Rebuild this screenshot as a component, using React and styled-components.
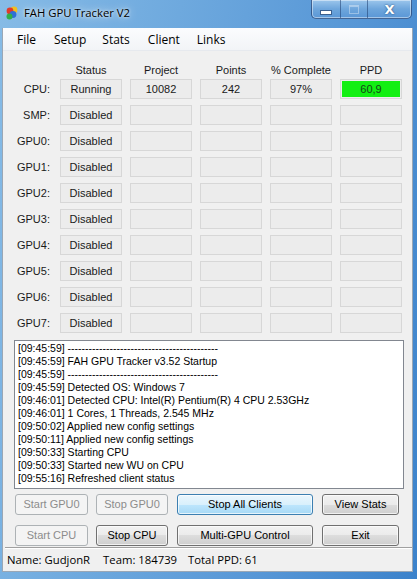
import React from "react";
import styled, { createGlobalStyle } from "styled-components";

const GlobalStyle = createGlobalStyle`
  html, body { margin: 0; padding: 0; background: #3f86cc; }
  body { font-family: "Liberation Sans", Arial, sans-serif; }
`;

const Window = styled.div`
  width: 417px;
  height: 579px;
  display: flex;
  flex-direction: column;
  background: linear-gradient(100deg, #86bbe6 0%, #6ea9de 35%, #5696d6 70%, #3b82cb 100%);
  overflow: hidden;
`;

const TitleBar = styled.div`
  height: 28px;
  flex: none;
  display: flex;
  align-items: flex-start;
  padding-left: 5px;
`;

const TitleText = styled.span`
  margin-top: 5px;
  margin-left: 5px;
  font-family: "Segoe UI", "Open Sans", sans-serif;
  font-size: 11.3px;
  color: #000;
  text-shadow: 0 0 8px rgba(255, 255, 255, 0.9), 0 0 3px rgba(255, 255, 255, 0.9);
`;

const IconBox = styled.div`
  margin-top: 6px;
  width: 14px;
  height: 14px;
`;

const Spacer = styled.div`
  flex: 1;
`;

const CaptionGroup = styled.div`
  display: flex;
  height: 18px;
  margin-right: 5px;
  border: 1px solid rgba(30, 60, 110, 0.7);
  border-top: none;
  border-radius: 0 0 5px 5px;
  overflow: hidden;
  background: linear-gradient(#9cc6ec, #6ea6dc 50%, #5a97d6);
  box-shadow: inset 0 0 0 1px rgba(255, 255, 255, 0.45);
`;

const CaptionButton = styled.div`
  width: ${p => p.w}px;
  display: flex;
  align-items: center;
  justify-content: center;
  border-left: ${p => (p.first ? "none" : "1px solid rgba(30, 60, 110, 0.55)")};
  color: #fff;
  font-family: "DejaVu Sans", sans-serif;
  font-weight: bold;
  font-size: 13px;
  text-shadow: 0 0 2px #1c3f6e;
`;

const MinGlyph = styled.div`
  width: 10px;
  height: 3px;
  margin-top: 6px;
  background: #fff;
  border: 1px solid #3b5f8e;
`;

const MaxGlyph = styled.div`
  width: 8px;
  height: 6px;
  border: 1px solid rgba(255, 255, 255, 0.5);
  border-top-width: 2px;
  opacity: 0.7;
`;

const Client = styled.div`
  flex: 1;
  margin: 0 4px 7px 2px;
  background: #f0f0f0;
  display: flex;
  flex-direction: column;
  border: 1px solid #9aa7b5;
  border-top: none;
`;

const MenuBar = styled.div`
  height: 22px;
  flex: none;
  display: flex;
  align-items: center;
  background: linear-gradient(#fbfcfe, #f2f4f7);
  border-bottom: 1px solid #e6e9ee;
  font-family: "Segoe UI", "Open Sans", sans-serif;
  font-size: 12px;
  color: #000;
  padding-left: 14px;
`;

const MenuItem = styled.span`
  margin-right: ${p => p.gap}px;
`;

const Body = styled.div`
  flex: 1;
  padding: 13px 0 0 2px;
  display: flex;
  flex-direction: column;
`;

const Grid = styled.div`
  display: grid;
  grid-template-columns: 47px repeat(5, 62px);
  column-gap: 8px;
  row-gap: 6px;
  font-size: 11px;
  color: #1a1a1a;
`;

const Header = styled.div`
  text-align: center;
  height: 12px;
  line-height: 12px;
  margin-bottom: -3px;
`;

const RowLabel = styled.div`
  text-align: right;
  padding-right: 2px;
  line-height: 20px;
`;

const Cell = styled.div`
  height: 18px;
  border: 1px solid #d7d7d7;
  background: #ececec;
  text-align: center;
  line-height: 18px;
`;

const GreenCell = styled(Cell)`
  padding: 1px;
  height: 16px;
  line-height: 16px;
  & > span {
    display: block;
    background: #12ef12;
    color: #15441a;
  }
`;

const LogBox = styled.div`
  margin: 7px 0 0 9px;
  width: 385px;
  height: 146px;
  border: 1px solid #828790;
  background: #fff;
  padding: 1px 0 0 3px;
  font-size: 10.5px;
  line-height: 13px;
  color: #000;
  white-space: pre;
  box-sizing: content-box;
`;

const ButtonGrid = styled.div`
  display: grid;
  grid-template-columns: 73px 72px 137px 78px;
  column-gap: 8px;
  row-gap: 10px;
  margin: 5px 0 0 10px;
  & > :nth-child(4n + 3),
  & > :nth-child(4n + 4) {
    margin-left: 1px;
  }
`;

const Button = styled.div`
  height: 19px;
  border: 1px solid ${p => (p.disabled ? "#adb2b5" : p.focus ? "#3c7fb1" : "#707070")};
  border-radius: 3px;
  background: ${p =>
    p.disabled
      ? "#f4f4f4"
      : p.focus
      ? "linear-gradient(#eaf6fd, #d9f0fc 50%, #bee6fd 50%, #a7d9f5)"
      : "linear-gradient(#f2f2f2, #ebebeb 50%, #dddddd 50%, #cfcfcf)"};
  box-shadow: inset 0 0 0 1px ${p => (p.disabled ? "transparent" : "rgba(255,255,255,0.7)")};
  color: ${p => (p.disabled ? "#8c8c8c" : "#000")};
  font-size: 11px;
  text-align: center;
  line-height: 19px;
`;

const StatusBar = styled.div`
  margin-top: auto;
  height: 23px;
  border-top: 1px solid #a0a0a0;
  display: flex;
  align-items: center;
  padding-left: 2px;
  font-family: "Segoe UI", "Open Sans", sans-serif;
  font-size: 11.3px;
  color: #000;
  box-shadow: inset 0 1px 0 #fff;
`;

const StatusItem = styled.span`
  margin-right: ${p => p.gap}px;
`;

const AppIcon = () => (
  <svg width="14" height="14" viewBox="0 0 14 14">
    <circle cx="9" cy="4" r="3.4" fill="#f0c020" />
    <circle cx="5" cy="5" r="3.4" fill="#e23a2a" />
    <circle cx="8" cy="8.5" r="3.4" fill="#2f6fd6" />
    <circle cx="4.5" cy="10.5" r="3" fill="#2fb04a" />
  </svg>
);

const rows = ["SMP", "GPU0", "GPU1", "GPU2", "GPU3", "GPU4", "GPU5", "GPU6", "GPU7"];

const dashes = "-".repeat(43);

const log = [
  `[09:45:59] ${dashes}`,
  "[09:45:59] FAH GPU Tracker v3.52 Startup",
  `[09:45:59] ${dashes}`,
  "[09:45:59] Detected OS: Windows 7",
  "[09:46:01] Detected CPU: Intel(R) Pentium(R) 4 CPU 2.53GHz",
  "[09:46:01] 1 Cores, 1 Threads, 2.545 MHz",
  "[09:50:02] Applied new config settings",
  "[09:50:11] Applied new config settings",
  "[09:50:33] Starting CPU",
  "[09:50:33] Started new WU on CPU",
  "[09:55:16] Refreshed client status",
];

export default function App() {
  return (
    <Window>
      <GlobalStyle />
      <TitleBar>
        <IconBox>
          <AppIcon />
        </IconBox>
        <TitleText>FAH GPU Tracker V2</TitleText>
        <Spacer />
        <CaptionGroup>
          <CaptionButton w={28} first>
            <MinGlyph />
          </CaptionButton>
          <CaptionButton w={26}>
            <MaxGlyph />
          </CaptionButton>
          <CaptionButton w={43}>X</CaptionButton>
        </CaptionGroup>
      </TitleBar>
      <Client>
        <MenuBar>
          <MenuItem gap={18}>File</MenuItem>
          <MenuItem gap={16}>Setup</MenuItem>
          <MenuItem gap={18}>Stats</MenuItem>
          <MenuItem gap={17}>Client</MenuItem>
          <MenuItem gap={0}>Links</MenuItem>
        </MenuBar>
        <Body>
          <Grid>
            <div />
            <Header>Status</Header>
            <Header>Project</Header>
            <Header>Points</Header>
            <Header>% Complete</Header>
            <Header>PPD</Header>

            <RowLabel>CPU:</RowLabel>
            <Cell>Running</Cell>
            <Cell>10082</Cell>
            <Cell>242</Cell>
            <Cell>97%</Cell>
            <GreenCell>
              <span>60,9</span>
            </GreenCell>

            {rows.map(r => (
              <React.Fragment key={r}>
                <RowLabel>{r}:</RowLabel>
                <Cell>Disabled</Cell>
                <Cell />
                <Cell />
                <Cell />
                <Cell />
              </React.Fragment>
            ))}
          </Grid>
          <LogBox>{log.join("\n")}</LogBox>
          <ButtonGrid>
            <Button disabled>Start GPU0</Button>
            <Button disabled>Stop GPU0</Button>
            <Button focus>Stop All Clients</Button>
            <Button>View Stats</Button>
            <Button disabled>Start CPU</Button>
            <Button>Stop CPU</Button>
            <Button>Multi-GPU Control</Button>
            <Button>Exit</Button>
          </ButtonGrid>
          <StatusBar>
            <StatusItem gap={13}>Name: GudjonR</StatusItem>
            <StatusItem gap={11}>Team: 184739</StatusItem>
            <StatusItem gap={0}>Total PPD: 61</StatusItem>
          </StatusBar>
        </Body>
      </Client>
    </Window>
  );
}
